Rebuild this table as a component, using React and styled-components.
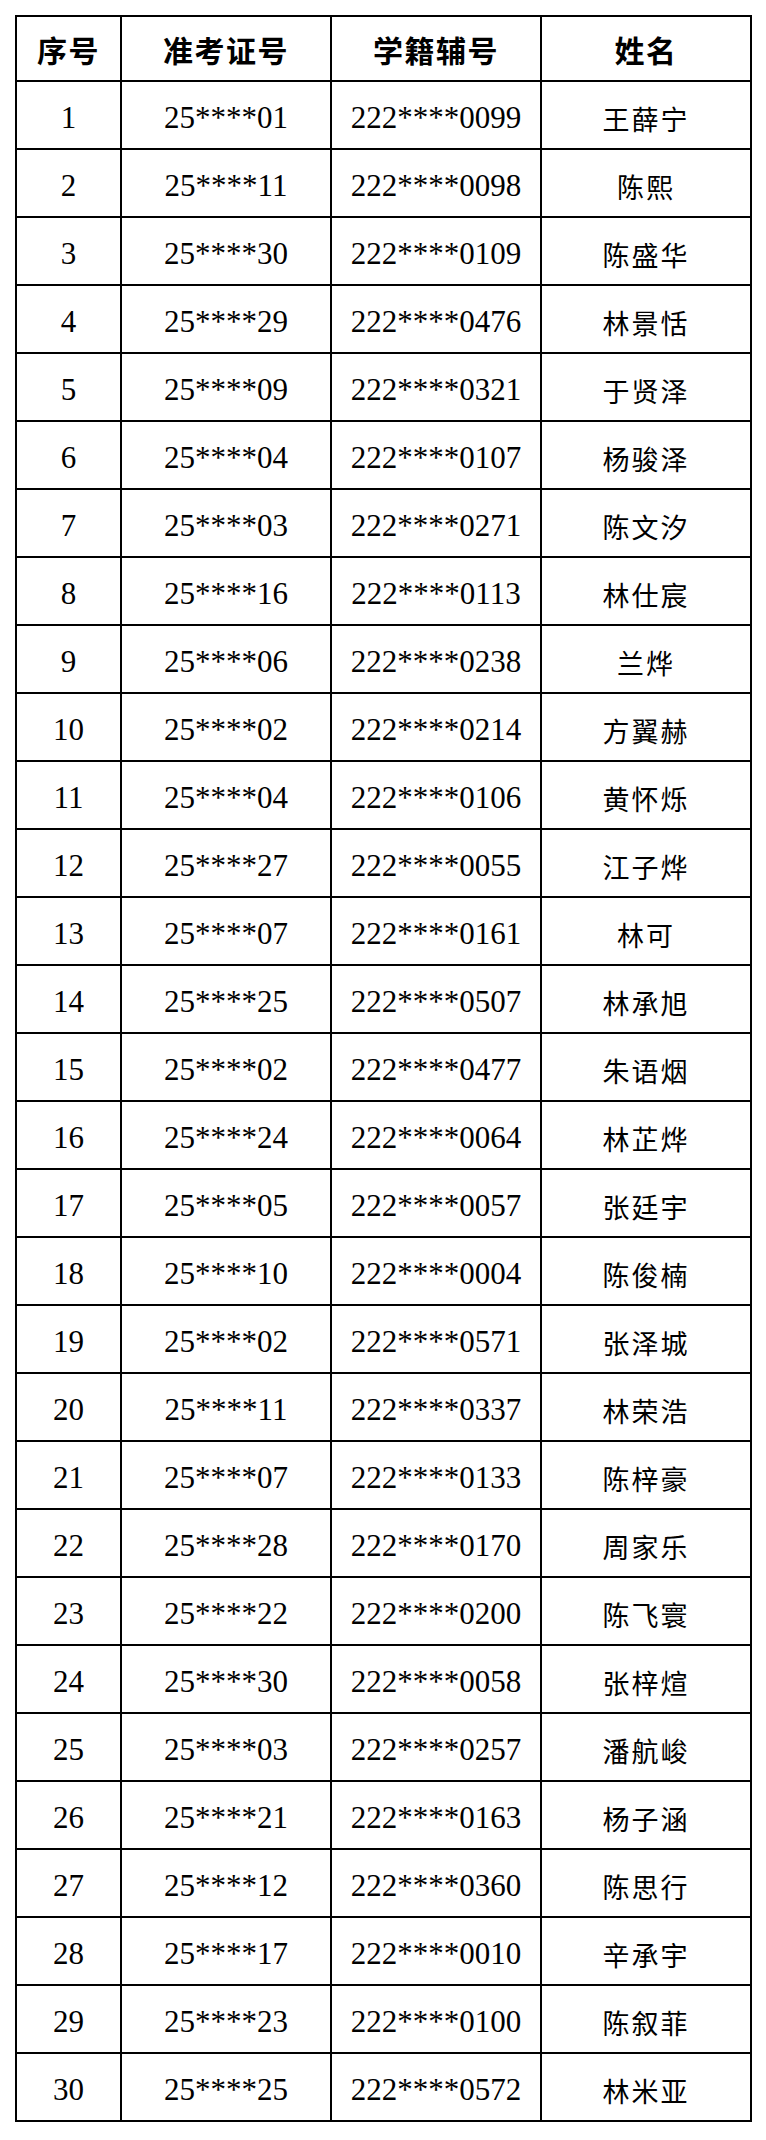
import styled, { createGlobalStyle } from 'styled-components';

const GlobalStyle = createGlobalStyle`
  body {
    margin: 0;
    background: #fff;
  }
`;

const Page = styled.div`
  padding: 15px 0 0 15px;
`;

const Table = styled.table`
  border-collapse: collapse;
  table-layout: fixed;
  width: 736px;
  color: #000;
`;

const HeadCell = styled.th`
  height: 65px;
  box-sizing: border-box;
  border: 2px solid #000;
  padding: 0;
  text-align: center;
  font-family: 'Noto Sans CJK SC', sans-serif;
  font-size: 30px;
  font-weight: 700;
  letter-spacing: 1.5px;
`;

const Cell = styled.td`
  height: 60px;
  border: 2px solid #000;
  padding: 6px 0 0;
  text-align: center;
  font-family: 'Liberation Serif', 'Noto Sans CJK SC', serif;
  font-size: ${(p) => (p.$name ? '27px' : '31px')};
  font-weight: 400;
  letter-spacing: ${(p) => (p.$name ? '2px' : '0')};
`;

const rows = [
  ['25****01', '222****0099', '王薛宁'],
  ['25****11', '222****0098', '陈熙'],
  ['25****30', '222****0109', '陈盛华'],
  ['25****29', '222****0476', '林景恬'],
  ['25****09', '222****0321', '于贤泽'],
  ['25****04', '222****0107', '杨骏泽'],
  ['25****03', '222****0271', '陈文汐'],
  ['25****16', '222****0113', '林仕宸'],
  ['25****06', '222****0238', '兰烨'],
  ['25****02', '222****0214', '方翼赫'],
  ['25****04', '222****0106', '黄怀烁'],
  ['25****27', '222****0055', '江子烨'],
  ['25****07', '222****0161', '林可'],
  ['25****25', '222****0507', '林承旭'],
  ['25****02', '222****0477', '朱语烟'],
  ['25****24', '222****0064', '林芷烨'],
  ['25****05', '222****0057', '张廷宇'],
  ['25****10', '222****0004', '陈俊楠'],
  ['25****02', '222****0571', '张泽城'],
  ['25****11', '222****0337', '林荣浩'],
  ['25****07', '222****0133', '陈梓豪'],
  ['25****28', '222****0170', '周家乐'],
  ['25****22', '222****0200', '陈飞寰'],
  ['25****30', '222****0058', '张梓煊'],
  ['25****03', '222****0257', '潘航峻'],
  ['25****21', '222****0163', '杨子涵'],
  ['25****12', '222****0360', '陈思行'],
  ['25****17', '222****0010', '辛承宇'],
  ['25****23', '222****0100', '陈叙菲'],
  ['25****25', '222****0572', '林米亚'],
];

const App = () => {
  return (
    <>
      <GlobalStyle />
      <Page>
        <Table>
          <colgroup>
            <col style={{ width: 105 }} />
            <col style={{ width: 210 }} />
            <col style={{ width: 210 }} />
            <col style={{ width: 210 }} />
          </colgroup>
          <thead>
            <tr>
              <HeadCell>序号</HeadCell>
              <HeadCell>准考证号</HeadCell>
              <HeadCell>学籍辅号</HeadCell>
              <HeadCell>姓名</HeadCell>
            </tr>
          </thead>
          <tbody>
            {rows.map((row, i) => (
              <tr key={i}>
                <Cell>{i + 1}</Cell>
                <Cell>{row[0]}</Cell>
                <Cell>{row[1]}</Cell>
                <Cell $name>{row[2]}</Cell>
              </tr>
            ))}
          </tbody>
        </Table>
      </Page>
    </>
  );
};

export default App;
